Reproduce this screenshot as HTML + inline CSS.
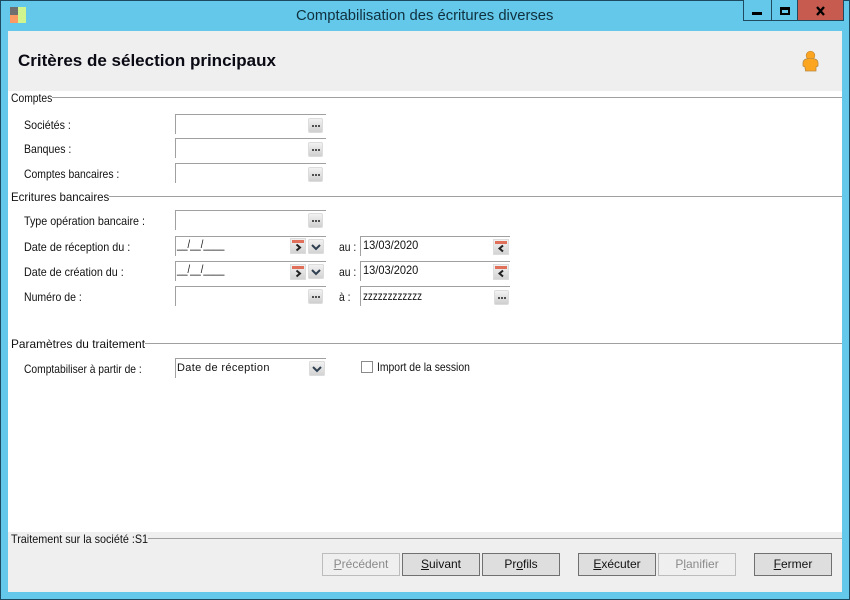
<!DOCTYPE html>
<html lang="fr"><head><meta charset="utf-8"><title>Comptabilisation des écritures diverses</title>
<style>
*{box-sizing:border-box}
html,body{margin:0;padding:0}
body{width:850px;height:600px;position:relative;overflow:hidden;background:#63c8ea;font-family:"Liberation Sans",sans-serif;font-size:12px;color:#111}
.a{position:absolute;white-space:nowrap}
.hl{position:absolute;height:1px;background:#a0a0a0}
.t{position:absolute;white-space:nowrap;line-height:14px;transform:scaleX(var(--s,.88));transform-origin:0 0}
.f{position:absolute;height:20px;border-top:1px solid #a0a0a0;border-left:1px solid #a0a0a0;width:151px;background:#fff}
.b{position:absolute;width:15px;height:15px;background:linear-gradient(#f2f2f2,#cfcfcf);border:1px solid #dcdcdc;border-radius:2px}
.d::after{content:"";position:absolute;left:3px;top:6px;width:9px;height:2px;background:radial-gradient(circle at 1px 1px,#444 1px,transparent 1.2px) 0 0/3px 2px}
.btn{position:absolute;top:553px;height:23px;width:78px;background:#dedede;border:1px solid #707070;text-align:center;line-height:21px;font-size:12px;color:#111}
.btn.off{background:#efefef;border-color:#bcbcbc;color:#8a8a8a}
u{text-underline-offset:1px}
</style></head><body>
<div class="a" style="left:0;top:0;width:850px;height:600px;border:1px solid #1d4a60;"></div>
<div class="a" style="left:10px;top:7px;width:8px;height:8px;background:#6f6f6f"></div>
<div class="a" style="left:10px;top:15px;width:8px;height:8px;background:#fb9a63"></div>
<div class="a" style="left:18px;top:7px;width:8px;height:16px;background:#d0f58e"></div>
<div class="a" style="left:296px;top:8px;font-size:14.8px;line-height:17px;color:#10303f">Comptabilisation des écritures diverses</div>

<div class="a" style="left:743px;top:0;width:29px;height:21px;border:1px solid #1f4a60;border-top:0;background:#63c8ea"></div>
<div class="a" style="left:771px;top:0;width:27px;height:21px;border:1px solid #1f4a60;border-top:0;background:#63c8ea"></div>
<div class="a" style="left:797px;top:0;width:47px;height:21px;border:1px solid #1f4a60;border-top:0;background:#c75b50"></div>
<div class="a" style="left:752px;top:12px;width:10px;height:3px;background:#000"></div>
<div class="a" style="left:780px;top:7px;width:10px;height:8px;border:2px solid #000;border-top-width:3px"></div>
<svg class="a" style="left:816px;top:6px" width="10" height="10" viewBox="0 0 10 10"><path d="M1 1 L8 9 M8 1 L1 9" stroke="#000" stroke-width="2.3" fill="none"/></svg>

<div class="a" style="left:8px;top:31px;width:834px;height:561px;background:#fff"></div>
<div class="a" style="left:8px;top:31px;width:834px;height:60px;background:#efefef"></div>
<div class="a" style="left:18px;top:50px;font-size:17px;font-weight:bold;line-height:21px;color:#0a0a14">Critères de sélection principaux</div>
<svg class="a" style="left:802px;top:50px" width="17" height="22" viewBox="0 0 17 22"><circle cx="8.500" cy="5.500" r="4.300" fill="#fba520" stroke="#c98a30" stroke-width=".7"/><path d="M4 9 Q8.500 7.500 13 9 Q16 10 16 13 L16 16 L14 17 L14 21 H3.500 L3 17 L1 16 L1 13 Q1 10 4 9 Z" fill="#fba520" stroke="#b98a45" stroke-width=".8"/></svg>

<div class="hl" style="left:52px;top:97px;width:790px"></div>
<div class="t" style="left:11px;top:91px;--s:.86">Comptes</div>
<div class="t" style="left:24px;top:118px;--s:.89">Sociétés :</div>
<div class="t" style="left:24px;top:142px;--s:.875">Banques :</div>
<div class="t" style="left:24px;top:167px;--s:.866">Comptes bancaires :</div>
<div class="f" style="left:175px;top:114px"></div><div class="b d" style="left:308px;top:118px"></div>
<div class="f" style="left:175px;top:138px"></div><div class="b d" style="left:308px;top:142px"></div>
<div class="f" style="left:175px;top:163px"></div><div class="b d" style="left:308px;top:167px"></div>

<div class="hl" style="left:109px;top:196px;width:733px"></div>
<div class="t" style="left:11px;top:190px;--s:.957">Ecritures bancaires</div>
<div class="t" style="left:24px;top:214px;--s:.893">Type opération bancaire :</div>
<div class="t" style="left:24px;top:240px;--s:.9">Date de réception du :</div>
<div class="t" style="left:24px;top:265px;--s:.895">Date de création du :</div>
<div class="t" style="left:24px;top:290px;--s:.875">Numéro de :</div>
<div class="f" style="left:175px;top:210px"></div><div class="b d" style="left:308px;top:213px"></div>

<div class="f" style="left:175px;top:236px"></div><div class="t" style="left:177px;top:237px;--s:.79">__/__/____</div>
<div class="f" style="left:175px;top:261px"></div><div class="t" style="left:177px;top:262px;--s:.79">__/__/____</div>
<div class="f" style="left:175px;top:286px"></div><div class="b d" style="left:308px;top:289px"></div>

<svg class="a" style="left:290px;top:238px" width="36" height="17" viewBox="0 0 36 17"><defs><linearGradient id="g" x1="0" y1="0" x2="0" y2="1"><stop offset="0" stop-color="#f2f2f2"/><stop offset="1" stop-color="#d2d2d2"/></linearGradient></defs><rect x=".5" y=".5" width="15" height="15" fill="url(#g)" stroke="#dcdcdc"/><rect x="2" y="2" width="12" height="3" fill="#e0705a"/><path d="M6.500 6.500 L10 9.500 L6.500 12.500" stroke="#222" stroke-width="2" fill="none"/><rect x="18.500" y="1.500" width="15" height="14" rx="1" fill="url(#g)" stroke="#dcdcdc"/><path d="M22 7 L26 11 L30 7" stroke="#2f3f52" stroke-width="2" fill="none"/></svg>
<svg class="a" style="left:290px;top:264px" width="36" height="17" viewBox="0 0 36 17"><rect x=".5" y=".5" width="15" height="15" fill="url(#g)" stroke="#dcdcdc"/><rect x="2" y="2" width="12" height="3" fill="#e0705a"/><path d="M6.500 6.500 L10 9.500 L6.500 12.500" stroke="#222" stroke-width="2" fill="none"/><rect x="18.500" y=".5" width="15" height="14" rx="1" fill="url(#g)" stroke="#dcdcdc"/><path d="M22 6 L26 10 L30 6" stroke="#2f3f52" stroke-width="2" fill="none"/></svg>

<div class="t" style="left:339px;top:240px;--s:.86">au :</div>
<div class="t" style="left:339px;top:265px;--s:.86">au :</div>
<div class="t" style="left:339px;top:290px;--s:.86">à :</div>
<div class="f" style="left:360px;top:236px;width:150px"></div><div class="t" style="left:363px;top:238px;--s:.92">13/03/2020</div>
<div class="f" style="left:360px;top:261px;width:150px"></div><div class="t" style="left:363px;top:263px;--s:.92">13/03/2020</div>
<div class="f" style="left:360px;top:286px;width:150px"></div><div class="t" style="left:363px;top:289px;--s:.82">zzzzzzzzzzzz</div>
<svg class="a" style="left:493px;top:239px" width="16" height="16" viewBox="0 0 16 16"><rect x=".5" y=".5" width="15" height="15" fill="url(#g)" stroke="#dcdcdc"/><rect x="2" y="2" width="12" height="3" fill="#e0705a"/><path d="M10 6.500 L6.500 9.500 L10 12.500" stroke="#222" stroke-width="2" fill="none"/></svg>
<svg class="a" style="left:493px;top:264px" width="16" height="16" viewBox="0 0 16 16"><rect x=".5" y=".5" width="15" height="15" fill="url(#g)" stroke="#dcdcdc"/><rect x="2" y="2" width="12" height="3" fill="#e0705a"/><path d="M10 6.500 L6.500 9.500 L10 12.500" stroke="#222" stroke-width="2" fill="none"/></svg>
<div class="b d" style="left:494px;top:290px"></div>

<div class="hl" style="left:145px;top:343px;width:697px"></div>
<div class="t" style="left:11px;top:337px;--s:.99">Paramètres du traitement</div>
<div class="t" style="left:24px;top:362px;--s:.857">Comptabiliser à partir de :</div>
<div class="f" style="left:175px;top:358px"></div><div class="t" style="left:177px;top:361px;font-size:11px;letter-spacing:.35px;--s:1">Date de réception</div>
<svg class="a" style="left:309px;top:361px" width="17" height="16" viewBox="0 0 17 16"><rect x=".5" y=".5" width="15" height="14" rx="1" fill="url(#g)" stroke="#dcdcdc"/><path d="M4 6 L8 10 L12 6" stroke="#2f3f52" stroke-width="2" fill="none"/></svg>
<div class="a" style="left:361px;top:361px;width:12px;height:12px;border:1px solid #8a8a8a;background:#fff"></div>
<div class="t" style="left:377px;top:360px;--s:.865">Import de la session</div>

<div class="a" style="left:8px;top:532px;width:834px;height:60px;background:#efefef"></div>
<div class="hl" style="left:148px;top:538px;width:694px"></div>
<div class="t" style="left:11px;top:532px;--s:.9">Traitement sur la société :S1</div>
<div class="btn off" style="left:322px"><u>P</u>récédent</div>
<div class="btn" style="left:402px"><u>S</u>uivant</div>
<div class="btn" style="left:482px">Pr<u>o</u>fils</div>
<div class="btn" style="left:578px"><u>E</u>xécuter</div>
<div class="btn off" style="left:658px">P<u>l</u>anifier</div>
<div class="btn" style="left:754px"><u>F</u>ermer</div>
</body></html>
